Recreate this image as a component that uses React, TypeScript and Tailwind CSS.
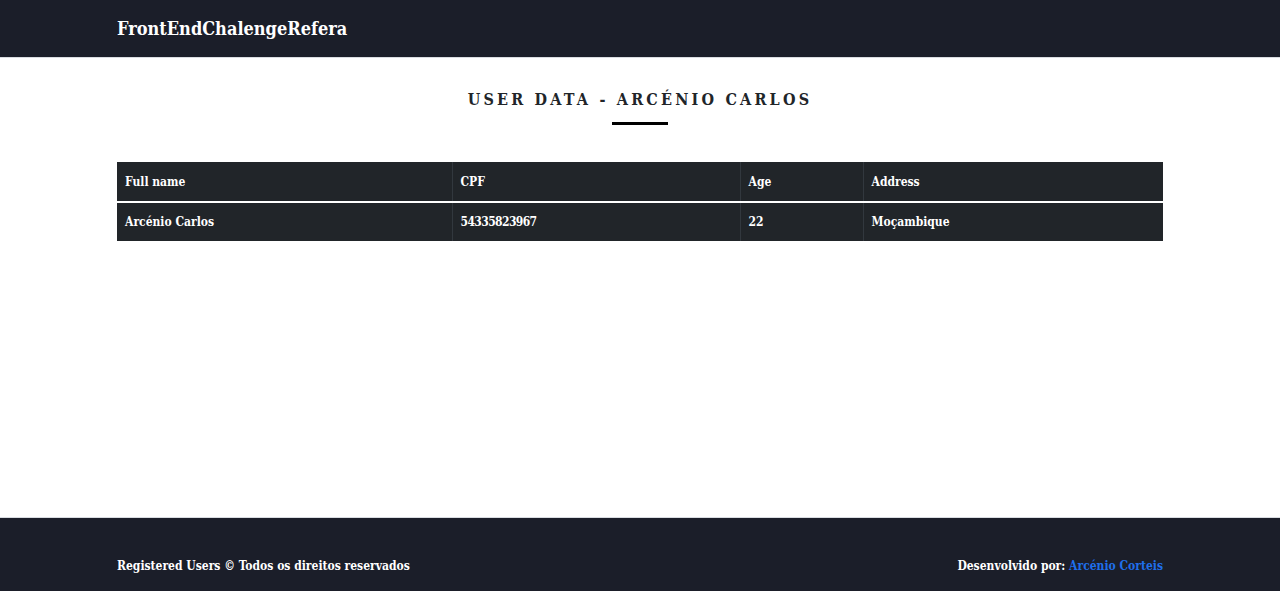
import React from 'react';

const rows = [{ name: 'Arcénio Carlos', cpf: '54335823967', age: '22', address: 'Moçambique' }];

export default function App() {
  return (
    <div className="min-h-[591px] flex flex-col bg-white font-['DejaVu_Serif',serif] [font-stretch:condensed]">
      {/* Navbar */}
      <header className="h-[58px] bg-[#1b1e29] border-b border-[#d9dce1]">
        <div className="w-[1046px] mx-auto h-full flex items-center">
          <span className="text-white font-bold text-[18px]">FrontEndChalengeRefera</span>
        </div>
      </header>

      {/* Content */}
      <main className="flex-1 w-[1046px] mx-auto pt-[31px]">
        <div className="flex flex-col items-center">
          <h1 className="text-[#212529] font-bold text-[16px] tracking-[3.2px] uppercase leading-[22px]">
            User Data - Arcénio Carlos
          </h1>
          <div className="w-[56px] h-[3px] bg-black mt-[11px]" />
        </div>

        <table className="w-full mt-[37px] bg-[#212529] text-white text-[12px] font-bold border-collapse">
          <thead>
            <tr className="h-[40px] border-b-2 border-white">
              <th className="w-[335px] text-left px-[8px] font-bold border-r border-[#32383e]">Full name</th>
              <th className="w-[288px] text-left px-[8px] font-bold border-r border-[#32383e]">CPF</th>
              <th className="w-[123px] text-left px-[8px] font-bold border-r border-[#32383e]">Age</th>
              <th className="text-left px-[8px] font-bold">Address</th>
            </tr>
          </thead>
          <tbody>
            {rows.map((r) => (
              <tr key={r.cpf} className="h-[39px]">
                <td className="px-[8px] border-r border-[#32383e]">{r.name}</td>
                <td className="px-[8px] border-r border-[#32383e] tracking-[-0.6px]">{r.cpf}</td>
                <td className="px-[8px] border-r border-[#32383e]">{r.age}</td>
                <td className="px-[8px]">{r.address}</td>
              </tr>
            ))}
          </tbody>
        </table>
      </main>

      {/* Footer */}
      <footer className="h-[74px] bg-[#1b1e29] border-t border-[#d9dce1]">
        <div className="w-[1046px] mx-auto h-full flex items-center justify-between pt-[22px] text-[12px] font-bold text-white">
          <span>Registered Users © Todos os direitos reservados</span>
          <span>
            Desenvolvido por: <a className="text-[#1f6feb]">Arcénio Corteis</a>
          </span>
        </div>
      </footer>
    </div>
  );
}
